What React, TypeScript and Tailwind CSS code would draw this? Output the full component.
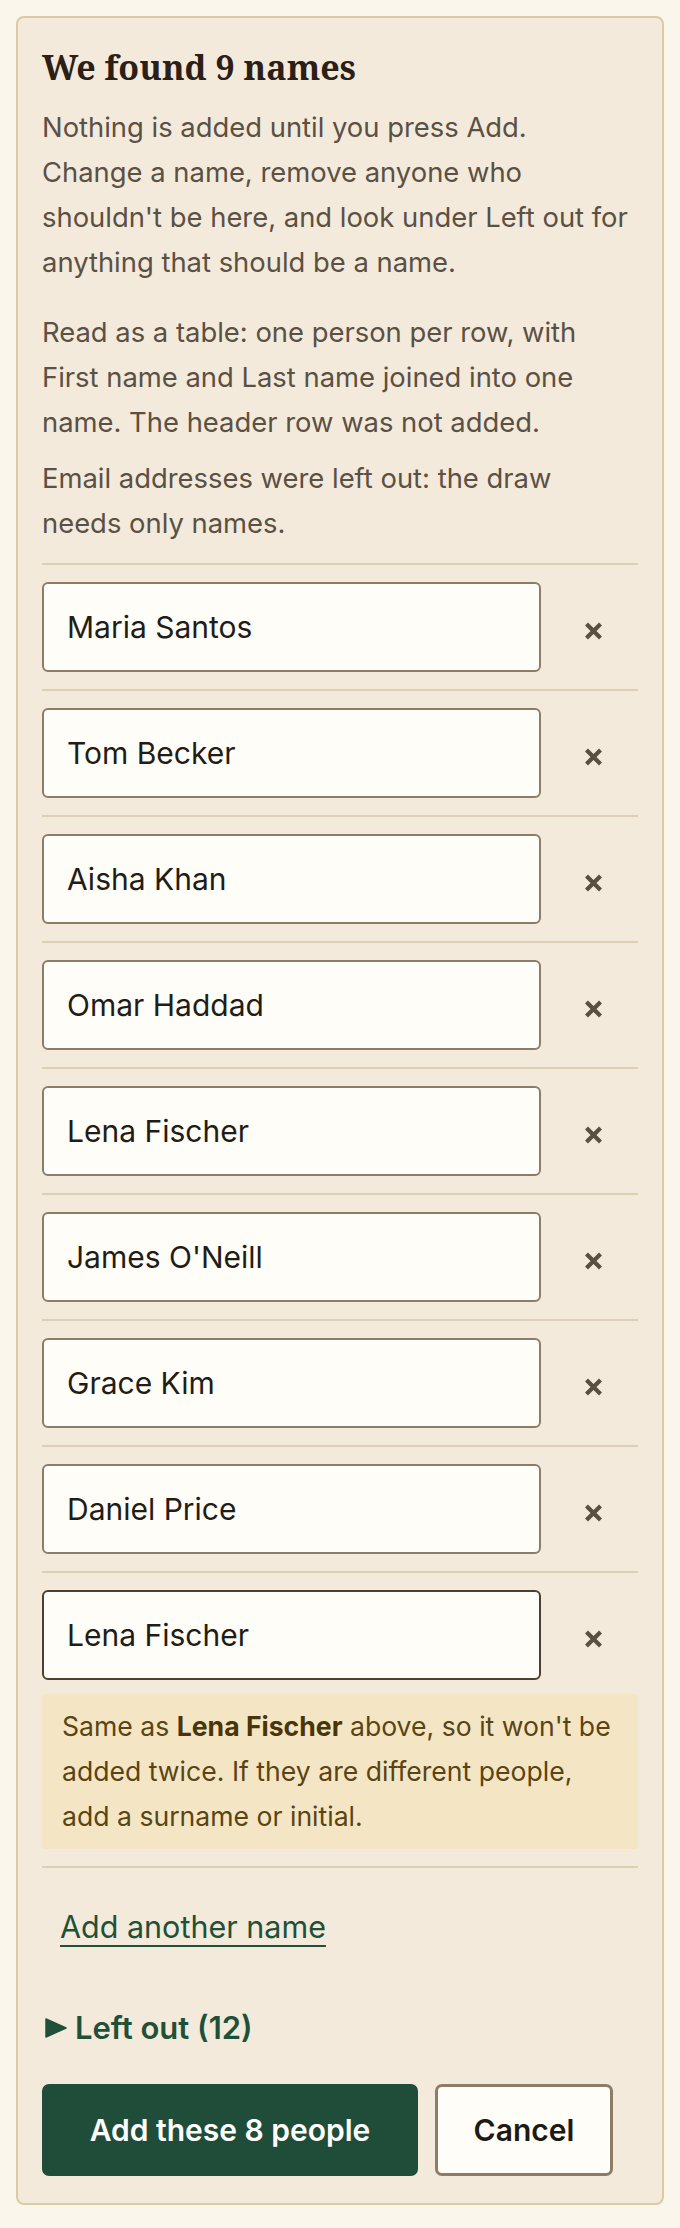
import { useState } from 'react';

const found = [
  'Maria Santos',
  'Tom Becker',
  'Aisha Khan',
  'Omar Haddad',
  'Lena Fischer',
  "James O'Neill",
  'Grace Kim',
  'Daniel Price',
  'Lena Fischer',
];

function RemoveIcon() {
  return (
    <svg width="19" height="18" viewBox="0 0 19 18" aria-hidden="true">
      <path d="M2.5 2 16.5 16M16.5 2 2.5 16" stroke="#5b4f42" strokeWidth="4.2" strokeLinecap="butt" />
    </svg>
  );
}

function NameRow({
  value,
  duplicateOf,
  onChange,
  onRemove,
}: {
  value: string;
  duplicateOf: string | null;
  onChange: (v: string) => void;
  onRemove: () => void;
}) {
  return (
    <li className="border-t-2 border-[#dccfb3] py-[17px]">
      <div className="flex items-center">
        <input
          value={value}
          onChange={(e) => onChange(e.target.value)}
          className={`h-[90px] min-w-0 flex-1 rounded-[6px] border-2 bg-[#fffdf8] px-[23px] text-[30px] text-[#221c16] outline-none ${
            duplicateOf ? 'border-[#4d4030]' : 'border-[#8b7d6a]'
          }`}
        />
        <button onClick={onRemove} aria-label={`Remove ${value}`} className="ml-[17px] mr-[10px] flex w-[70px] justify-center pt-[7px]">
          <RemoveIcon />
        </button>
      </div>
      {duplicateOf && (
        <p className="mt-[14px] rounded-[4px] bg-[#f4e6c4] px-[20px] py-[10px] text-[26.6px] leading-[45px] text-[#5a4413]">
          Same as <strong className="font-bold text-[#4a3508]">{duplicateOf}</strong> above, so it won't be added twice. If they are different
          people, add a surname or initial.
        </p>
      )}
    </li>
  );
}

export default function App() {
  const [names, setNames] = useState(found);

  const dupOf = (index: number) => {
    const key = names[index].trim().toLowerCase();
    const earlier = names.slice(0, index).find((n) => n.trim().toLowerCase() === key);
    return key && earlier ? earlier : null;
  };
  const unique = names.filter((_, i) => !dupOf(i) && names[i].trim()).length;

  return (
    <div className="min-h-screen bg-[#faf6ec] p-4 font-['Inter',sans-serif]">
      <section className="rounded-[8px] border-2 border-[#dccaa2] bg-[#f3eadb] px-6 pb-[27px] pt-[28px]">
        <h2 className="font-['Noto_Serif',serif] text-[34px] font-bold leading-[42px] text-[#2a2017]">We found {names.length} names</h2>
        <div className="max-w-[590px] text-[27.4px] leading-[45px] text-[#5b5044]">
          <p className="mt-[17px]">
            <span className="block">Nothing is added until you press Add.</span>
            Change a name, remove anyone who shouldn't be here, and look under Left out for anything that should be a name.
          </p>
          <p className="mt-[25px]">
            Read as a table: one person per row, with First name and Last name joined into one name. The header row was not added.
          </p>
          <p className="mt-[11px]">Email addresses were left out: the draw needs only names.</p>
        </div>

        <ul className="mt-[17px] border-b-2 border-[#dccfb3]">
          {names.map((name, i) => (
            <NameRow
              key={i}
              value={name}
              duplicateOf={dupOf(i)}
              onChange={(v) => setNames((cur) => cur.map((n, j) => (j === i ? v : n)))}
              onRemove={() => setNames((cur) => cur.filter((_, j) => j !== i))}
            />
          ))}
        </ul>

        <div className="mt-[36px]">
          <button
            onClick={() => setNames((cur) => [...cur, ''])}
            className="ml-[18px] text-[30.5px] leading-[45px] text-[#1f5038] underline decoration-2 underline-offset-[7px]"
          >
            Add another name
          </button>
        </div>

        <div className="ml-[3px] mt-[59px] flex items-center gap-[8px] text-[31px] font-semibold leading-[40px] text-[#1f5038]">
          <svg width="22" height="20" viewBox="0 0 22 20" aria-hidden="true">
            <path d="M1 1 21 10 1 19Z" fill="#1f5038" stroke="#1f5038" strokeWidth="1.5" strokeLinejoin="round" />
          </svg>
          Left out (12)
        </div>

        <div className="mt-[36px] flex gap-[17px]">
          <button className="h-[92px] w-[376px] rounded-[7px] bg-[#1f4d39] text-[30px] font-semibold text-white">
            Add these {unique} people
          </button>
          <button className="h-[92px] w-[178px] rounded-[7px] border-[3px] border-[#8c7c68] bg-[#fffdf8] text-[30px] font-semibold text-[#1d1915]">
            Cancel
          </button>
        </div>
      </section>
    </div>
  );
}
